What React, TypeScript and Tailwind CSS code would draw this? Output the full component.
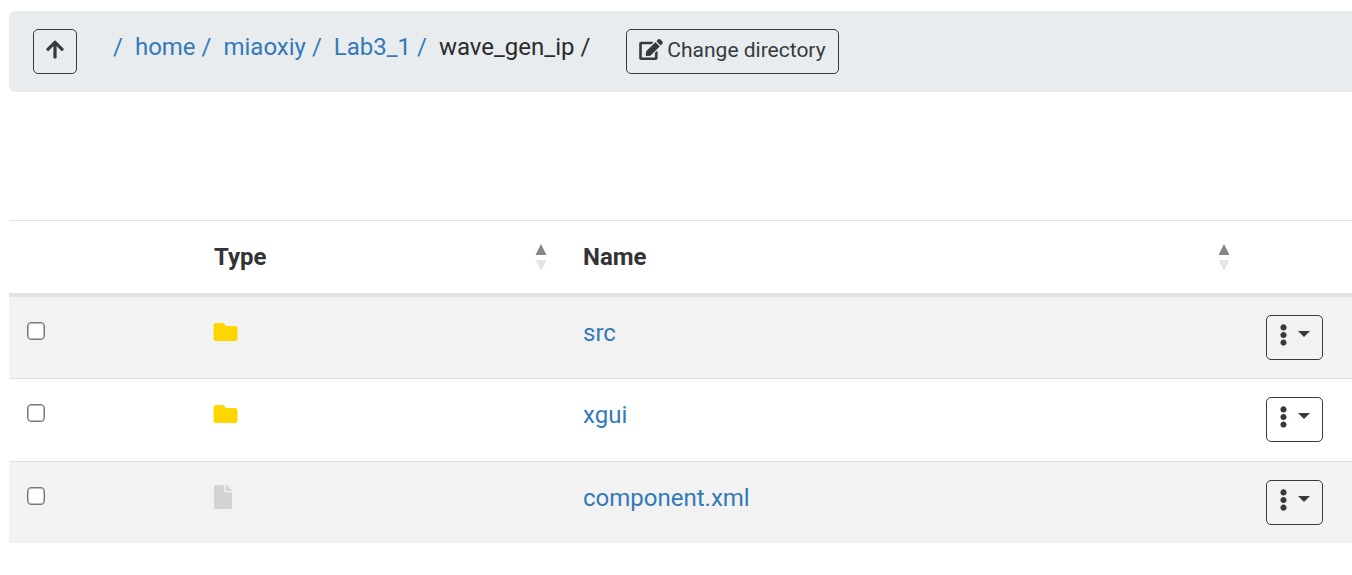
import { FaArrowUp, FaEdit, FaEllipsisV, FaFile, FaFolder } from "react-icons/fa";

type Entry = { name: string; kind: "folder" | "file" };

const parents = ["home", "miaoxiy", "Lab3_1"];

const entries: Entry[] = [
  { name: "src", kind: "folder" },
  { name: "xgui", kind: "folder" },
  { name: "component.xml", kind: "file" },
];

function Sorter() {
  return (
    <svg viewBox="0 0 12 28" className="h-7 w-3 shrink-0" aria-hidden="true">
      <path d="M6 1 L11.5 12 H0.5 Z" fill="#868686" />
      <path d="M0.5 17 H11.5 L6 28 Z" fill="#e6e6e6" />
    </svg>
  );
}

function SortHeader({ label }: { label: string }) {
  return (
    <th scope="col" aria-sort="none" className="p-0 text-left">
      <button type="button" className="flex h-18 w-full items-center justify-between px-[18px] font-bold">
        {label}
        <Sorter />
      </button>
    </th>
  );
}

function Breadcrumb() {
  return (
    <nav aria-label="Current directory" className="pl-9">
      <ol className="flex gap-3 text-[#337ab7]">
        <li>
          <a href="#/">/</a>
        </li>
        {parents.map((dir) => (
          <li key={dir}>
            <a href={`#${dir}`}>{dir} /</a>
          </li>
        ))}
        <li aria-current="page" className="text-[#292b2c]">
          wave_gen_ip /
        </li>
      </ol>
    </nav>
  );
}

function EntryRow({ entry }: { entry: Entry }) {
  return (
    <tr className="border-t border-[#dee2e6] align-top even:h-[83px] first:border-t-0 odd:bg-[#f2f2f2]">
      <td className="px-[18px] pt-[25px]">
        <input
          type="checkbox"
          aria-label={`Select ${entry.name}`}
          className="block size-[18px] appearance-none rounded-[4px] border border-[#767676] bg-white inset-shadow-[0_0_0_1px_#bbbbbb] checked:bg-[#337ab7]"
        />
      </td>
      <td className="px-[17px] pt-[23px]">
        {entry.kind === "folder" ? (
          <FaFolder role="img" aria-label="Folder" className="h-6 w-[25px] text-[#ffd700]" />
        ) : (
          <FaFile role="img" aria-label="File" className="h-6 w-5 text-[#d3d3d3]" />
        )}
      </td>
      <td className="px-[18px] pt-[18px]">
        <a href={`#${entry.name}`} className="text-[#337ab7]">
          {entry.name}
        </a>
      </td>
      <td className="px-[18px] py-[18px]">
        <button
          type="button"
          aria-label={`Actions for ${entry.name}`}
          className="flex h-[45px] w-[57px] gap-2.5 rounded-[5px] border border-[#343a40] pt-2 pl-3 text-[#343a40]"
        >
          <FaEllipsisV className="h-[22px] w-[9px]" />
          <svg viewBox="0 0 12 6" className="mt-[7px] h-1.5 w-3" aria-hidden="true">
            <path d="M0 0 H12 L6 6 Z" fill="currentColor" />
          </svg>
        </button>
      </td>
    </tr>
  );
}

export default function App() {
  return (
    <main className="bg-white pt-[11px] pl-[9px] font-['Roboto',sans-serif] text-[24px] leading-9 text-[#333333]">
      <header className="flex items-start rounded-l-md bg-[#e9ecef] px-6 py-[18px]">
        <button
          type="button"
          aria-label="Parent directory"
          className="flex h-[45px] w-11 rounded-[5px] border border-[#343a40] pt-[9px] pl-3 text-[#343a40]"
        >
          <FaArrowUp className="h-[21px] w-[18px]" />
        </button>
        <Breadcrumb />
        <button
          type="button"
          className="ml-9 flex h-[45px] gap-1 rounded-[5px] border border-[#343a40] px-3 text-[21px] leading-10 text-[#343a40]"
        >
          <FaEdit className="mt-[9px] h-[21px] w-6" />
          Change directory
        </button>
      </header>

      <table className="mt-32 w-full table-fixed border-collapse">
        <colgroup>
          <col className="w-[187px]" />
          <col className="w-[369px]" />
          <col />
          <col className="w-[104px]" />
        </colgroup>
        <thead>
          <tr className="border-t border-b-4 border-t-[#dee2e6] border-b-[#dee2e6]">
            <td />
            <SortHeader label="Type" />
            <SortHeader label="Name" />
            <td />
          </tr>
        </thead>
        <tbody>
          {entries.map((entry) => (
            <EntryRow key={entry.name} entry={entry} />
          ))}
        </tbody>
      </table>
    </main>
  );
}
